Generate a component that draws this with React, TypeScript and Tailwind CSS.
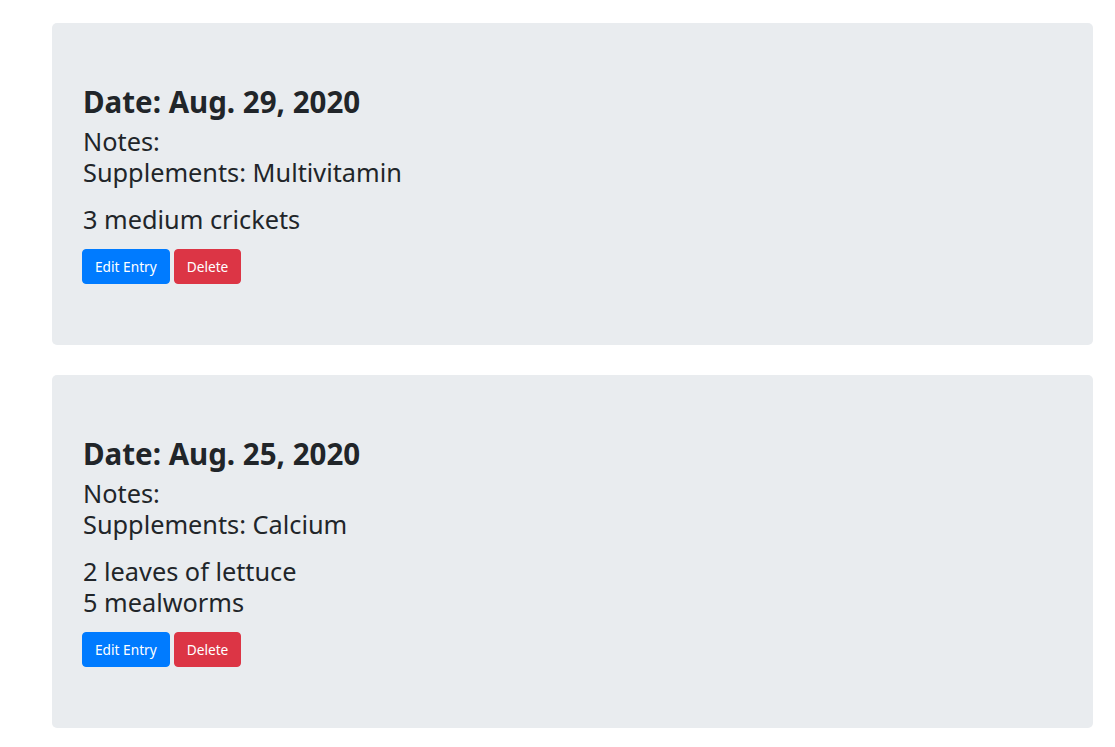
const entries = [
  { date: 'Aug. 29, 2020', notes: '', supplements: 'Multivitamin', food: ['3 medium crickets'] },
  { date: 'Aug. 25, 2020', notes: '', supplements: 'Calcium', food: ['2 leaves of lettuce', '5 mealworms'] },
];

function EntryCard({ entry }: { entry: (typeof entries)[number] }) {
  return (
    <div className="mb-[30px] rounded-[5px] bg-[#e9ecef] pl-[31px] pr-8 pt-[62px] pb-[61px]">
      <h3 className="mb-[7px] text-[29.5px] font-bold leading-[34px]">Date: {entry.date}</h3>
      <div className="text-[25.3px] leading-[31px]">
        <p>Notes: {entry.notes}</p>
        <p>Supplements: {entry.supplements}</p>
      </div>
      <div className="mt-4 text-[25.3px] leading-[31px]">
        {entry.food.map((f) => (
          <p key={f}>{f}</p>
        ))}
      </div>
      <div className="-ml-px mt-[14px] flex gap-1">
        <button className="h-[35px] rounded-[4px] border border-[#007bff] bg-[#007bff] px-3 text-[13.7px] leading-[21px] text-white">
          Edit Entry
        </button>
        <button className="h-[35px] rounded-[4px] border border-[#dc3545] bg-[#dc3545] px-3 text-[13.7px] leading-[21px] text-white">
          Delete
        </button>
      </div>
    </div>
  );
}

export default function App() {
  return (
    <div className="min-h-screen bg-white pt-[23px] text-[#212529]" style={{ fontFamily: '"Noto Sans", "Open Sans", sans-serif' }}>
      <div className="ml-[52px] w-[1041px]">
        {entries.map((e) => (
          <EntryCard key={e.date} entry={e} />
        ))}
      </div>
    </div>
  );
}
